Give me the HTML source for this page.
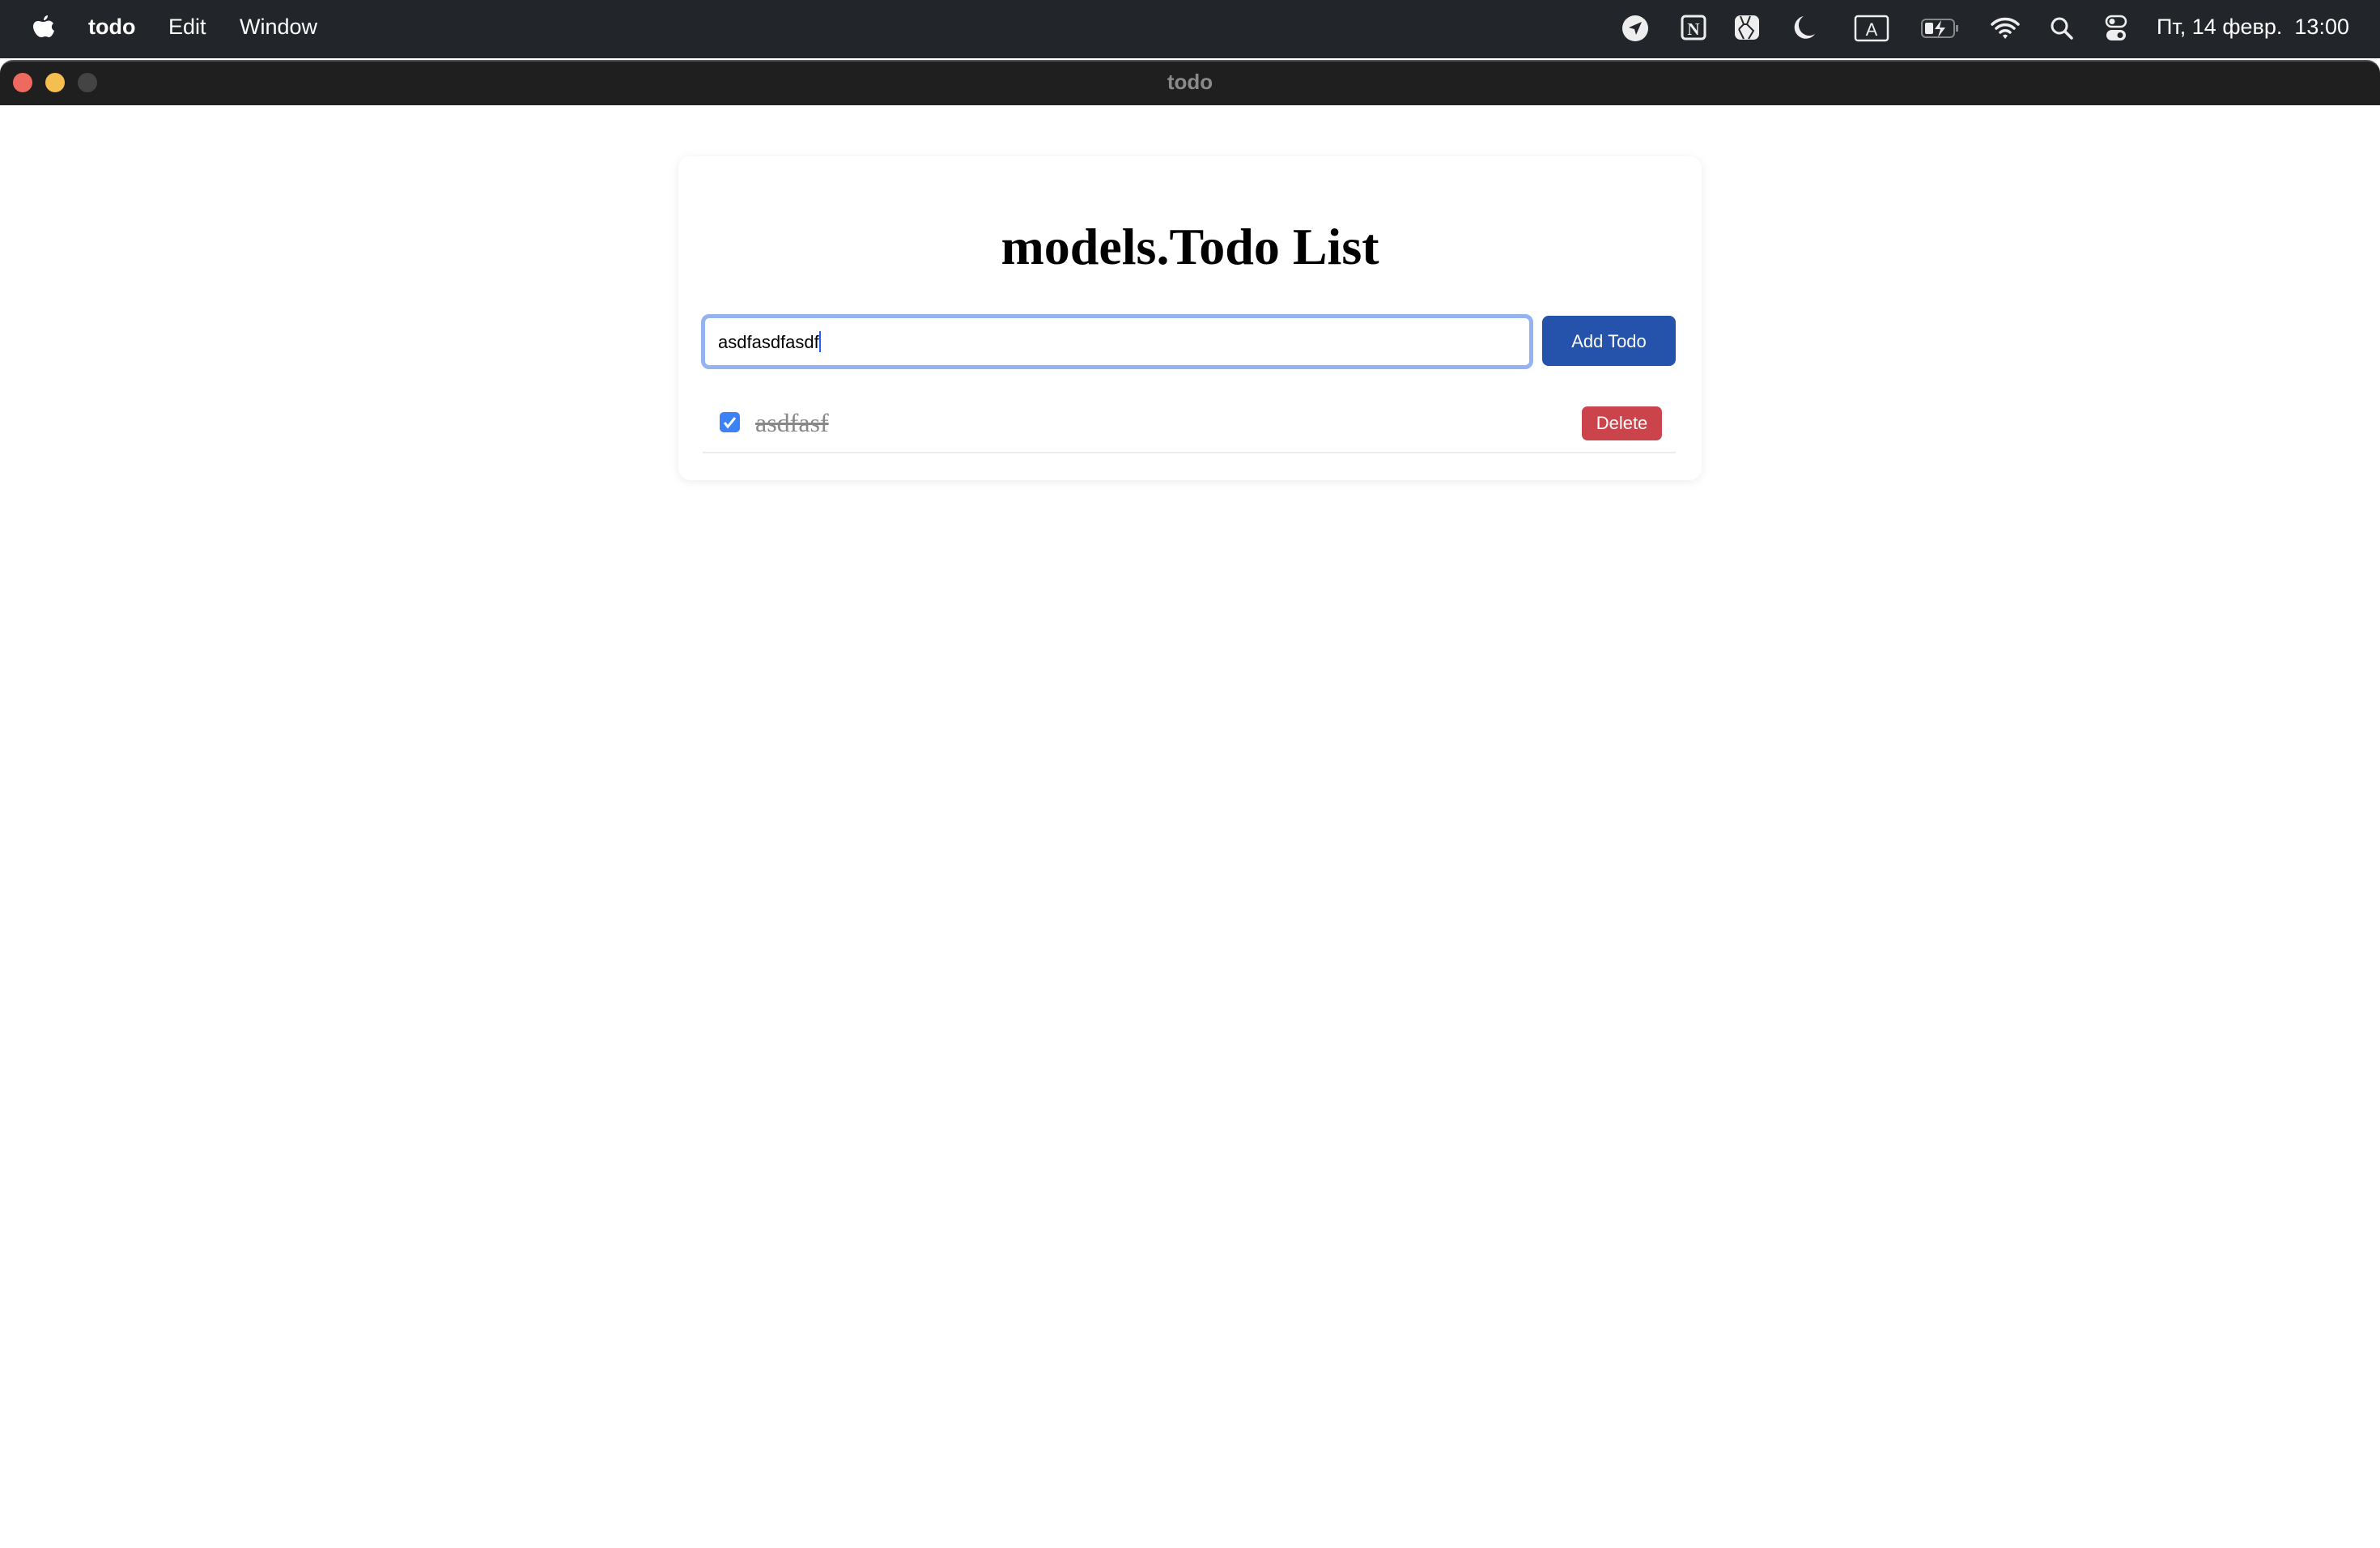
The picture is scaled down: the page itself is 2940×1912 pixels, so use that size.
<!DOCTYPE html>
<html><head><meta charset="utf-8"><style>
*{box-sizing:border-box;margin:0;padding:0}
body{width:2940px;height:1912px;background:#fff;position:relative;overflow:hidden;font-family:"Liberation Sans",sans-serif}
#menu{position:absolute;left:0;top:0;width:2940px;height:72px;background:#22262a;color:#fff;font-size:27px}
#menu span{position:absolute;top:18px}
.ic{position:absolute;top:14px}
#title{position:absolute;left:0;top:74px;width:2940px;height:56px;background:#1f1f1f;border-radius:16px 16px 0 0;border-top:2px solid #555}
.tl{position:absolute;top:90px;width:24px;height:24px;border-radius:50%}
#card{position:absolute;left:838px;top:193px;width:1264px;height:400px;background:#fff;border-radius:15px;box-shadow:0 2px 12px rgba(0,0,0,.08)}
h1{position:absolute;left:0;width:100%;top:268px;text-align:center;font:bold 64px "Liberation Serif",serif;color:#000}
#inp{position:absolute;left:866px;top:388px;width:1028px;height:68px;border:5px solid #94b3f0;border-radius:10px;background:#fff}
#inp span{position:absolute;left:16px;top:16px;font-size:22px;color:#000}
#add{position:absolute;left:1905px;top:390px;width:165px;height:62px;background:#2553ac;border-radius:8px;color:#fff;font-size:22px;text-align:center;line-height:64px}
#cb{position:absolute;left:889px;top:509px;width:25px;height:25px;background:#3b82f6;border-radius:5px}
#txt{position:absolute;left:933px;top:504px;font:32px "Liberation Serif",serif;color:#888;text-decoration:line-through}
#del{position:absolute;left:1954px;top:502px;width:99px;height:42px;background:#cc444b;border-radius:7px;color:#fff;font-size:22px;text-align:center;line-height:42px}
#hr{position:absolute;left:868px;top:558px;width:1202px;height:2px;background:#ececec}
</style></head><body>
<div id="menu">
<svg class="ic" style="left:40px;top:17px" width="28" height="34" viewBox="0 0 28 34"><path d="M19 2c0 3-2 6-5 6 0-3 2-6 5-6zM14 10c2 0 4-1.5 6-1.5 3 0 5 2 6 3.5-3 2-3 7 1 9-1 3-3 7-6 8-2 0-3-1-5-1s-3 1-5 1C6 29 1 21 1 16c0-5 3-7 6-7 2 0 4 1 7 1z" fill="#fff"/></svg>
<span style="left:109px;font-weight:bold">todo</span>
<span style="left:208px">Edit</span>
<span style="left:296px">Window</span>
<svg class="ic" style="left:2003px;top:18px" width="34" height="34"><circle cx="17" cy="17" r="16" fill="#eee"/><path d="M25 9 9 16l7 2 2 7z" fill="#22262a"/></svg>
<svg class="ic" style="left:2076px;top:18px" width="32" height="32"><rect x="2" y="2" width="28" height="28" rx="4" fill="none" stroke="#eee" stroke-width="3"/><text x="16" y="25" text-anchor="middle" font-family="Liberation Serif" font-weight="bold" font-size="21" fill="#eee">N</text></svg>
<svg class="ic" style="left:2142px;top:18px" width="32" height="32"><rect x="1" y="1" width="30" height="30" rx="7" fill="#eee"/><path d="M8 2 12 12 6 18M20 2 16 12 24 20 18 30M12 12h4M6 18l6 12" stroke="#22262a" stroke-width="2" fill="none"/></svg>
<svg class="ic" style="left:2214px;top:18px" width="30" height="32"><path d="M14 2A14 14 0 1 0 28 24 12 12 0 0 1 14 2z" fill="#eee"/></svg>
<svg class="ic" style="left:2290px;top:18px" width="44" height="34"><rect x="2" y="2" width="40" height="30" rx="3" fill="none" stroke="#eee" stroke-width="2.5"/><text x="22" y="26" text-anchor="middle" font-family="Liberation Sans" font-size="22" fill="#eee">A</text></svg>
<svg class="ic" style="left:2372px;top:22px" width="50" height="26"><rect x="2" y="2" width="40" height="22" rx="5" fill="none" stroke="#888" stroke-width="2"/><rect x="44" y="9" width="3" height="8" fill="#888"/><rect x="6" y="6" width="10" height="14" rx="2" fill="#eee"/><path d="M26 3 18 14h7l-3 10 9-12h-7z" fill="#eee"/></svg>
<svg class="ic" style="left:2459px;top:20px" width="36" height="28"><path d="M2 10a23 23 0 0 1 32 0M7 15a16 16 0 0 1 22 0M12 20a9 9 0 0 1 12 0" stroke="#eee" stroke-width="3.5" fill="none" stroke-linecap="round"/><path d="M15 24l3 4 3-4a4 4 0 0 0-6 0z" fill="#eee"/></svg>
<svg class="ic" style="left:2532px;top:20px" width="30" height="30"><circle cx="12" cy="12" r="9" fill="none" stroke="#eee" stroke-width="3"/><path d="M19 19l8 8" stroke="#eee" stroke-width="3.5" stroke-linecap="round"/></svg>
<svg class="ic" style="left:2600px;top:18px" width="28" height="34"><rect x="2" y="2" width="24" height="13" rx="6.5" fill="none" stroke="#eee" stroke-width="2.5"/><circle cx="9" cy="8.5" r="3.5" fill="#eee"/><rect x="2" y="19" width="24" height="13" rx="6.5" fill="#eee"/><circle cx="19" cy="25.5" r="3.5" fill="#22262a"/></svg>
<span style="left:2664px">Пт, 14 февр.&nbsp; 13:00</span>
</div>
<div id="title"><div style="position:absolute;left:0;width:100%;top:10px;text-align:center;color:#8a8a8a;font-weight:bold;font-size:26px">todo</div></div>
<div class="tl" style="left:16px;background:#ee6a5f"></div>
<div class="tl" style="left:56px;background:#f5bf4f"></div>
<div class="tl" style="left:96px;background:#444"></div>
<div id="card"></div>
<h1>models.Todo List</h1>
<div id="inp"><span>asdfasdfasdf<b style="display:inline-block;width:2px;height:26px;background:#2563eb;vertical-align:-5px"></b></span></div>
<div id="add">Add Todo</div>
<div id="cb"><svg width="25" height="25"><path d="M6 13l4 5 9-11" stroke="#fff" stroke-width="3" fill="none"/></svg></div>
<div id="txt">asdfasf</div>
<div id="del">Delete</div>
<div id="hr"></div>
</body></html>
